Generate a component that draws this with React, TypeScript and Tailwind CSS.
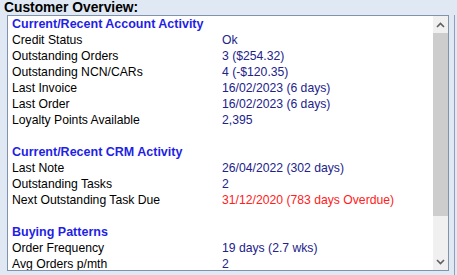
import React from "react";

type Row =
  | { kind: "head"; text: string }
  | { kind: "blank" }
  | { kind: "item"; label: string; value: string; red?: boolean };

const rows: Row[] = [
  { kind: "head", text: "Current/Recent Account Activity" },
  { kind: "item", label: "Credit Status", value: "Ok" },
  { kind: "item", label: "Outstanding Orders", value: "3 ($254.32)" },
  { kind: "item", label: "Outstanding NCN/CARs", value: "4 (-$120.35)" },
  { kind: "item", label: "Last Invoice", value: "16/02/2023 (6 days)" },
  { kind: "item", label: "Last Order", value: "16/02/2023 (6 days)" },
  { kind: "item", label: "Loyalty Points Available", value: "2,395" },
  { kind: "blank" },
  { kind: "head", text: "Current/Recent CRM Activity" },
  { kind: "item", label: "Last Note", value: "26/04/2022 (302 days)" },
  { kind: "item", label: "Outstanding Tasks", value: "2" },
  { kind: "item", label: "Next Outstanding Task Due", value: "31/12/2020 (783 days Overdue)", red: true },
  { kind: "blank" },
  { kind: "head", text: "Buying Patterns" },
  { kind: "item", label: "Order Frequency", value: "19 days (2.7 wks)" },
  { kind: "item", label: "Avg Orders p/mth", value: "2" },
];

export default function App() {
  return (
    <div
      className="relative w-[457px] h-[275px] overflow-hidden bg-[#dfe8f3] text-[12px] leading-[16px]"
      style={{ fontFamily: '"Liberation Sans", Arial, sans-serif' }}
    >
      <div className="pl-[4px] pt-[1px] h-[15px] font-bold text-black text-[13.8px] leading-[14px]">Customer Overview:</div>
      <div className="flex h-[256px]">
        <div className="ml-[7px] w-[442px] h-[256px] border border-[#7f93ad] bg-white flex overflow-hidden">
          <div className="flex-1 overflow-hidden">
            {rows.map((r, i) =>
              r.kind === "head" ? (
                <div key={i} className="h-[16px] pl-[4px] font-bold text-[12.5px] text-[#1f1fe6]">
                  {r.text}
                </div>
              ) : r.kind === "blank" ? (
                <div key={i} className="h-[16px]" />
              ) : (
                <div key={i} className="h-[16px] flex text-[12.2px]">
                  <div className="w-[214px] pl-[4px] text-black">{r.label}</div>
                  <div className={r.red ? "text-[#ff2020]" : "text-[#22228a]"}>{r.value}</div>
                </div>
              )
            )}
          </div>
          <div className="w-[15px] h-full bg-[#f0f0f0] flex flex-col">
            <div className="h-[17px] flex items-center justify-center">
              <svg width="9" height="6" viewBox="0 0 9 6">
                <path d="M1 5 L4.5 1.5 L8 5" stroke="#606060" strokeWidth="1.6" fill="none" />
              </svg>
            </div>
            <div className="h-[183px] bg-[#cdcdcd]" />
            <div className="flex-1" />
            <div className="h-[17px] flex items-center justify-center">
              <svg width="9" height="6" viewBox="0 0 9 6">
                <path d="M1 1 L4.5 4.5 L8 1" stroke="#606060" strokeWidth="1.6" fill="none" />
              </svg>
            </div>
          </div>
        </div>
        <div className="ml-[5px] w-[1px] h-[260px] bg-[#8aa0bb]" />
      </div>
    </div>
  );
}
